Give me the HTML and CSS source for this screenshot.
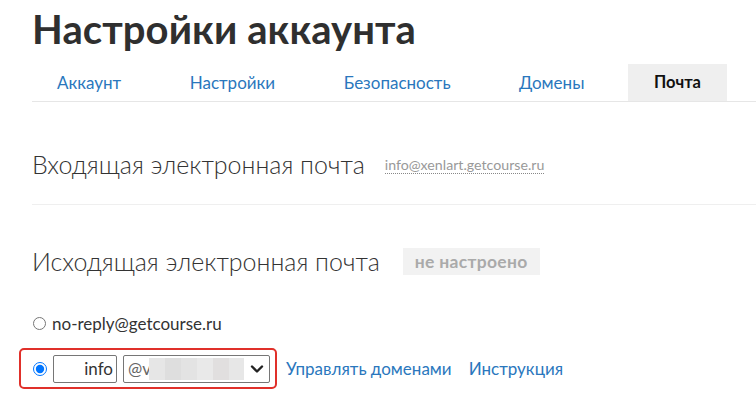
FILE: index.html
```html
<!DOCTYPE html>
<html lang="ru">
<head>
<meta charset="utf-8">
<title>Настройки аккаунта</title>
<link rel="stylesheet" href="styles.css">
</head>
<body>
<div class="page">
  <h1 class="title">Настройки аккаунта</h1>
  <nav class="tabs">
    <a class="tab" href="#">Аккаунт</a>
    <a class="tab" href="#">Настройки</a>
    <a class="tab" href="#">Безопасность</a>
    <a class="tab" href="#">Домены</a>
    <span class="tab active">Почта</span>
  </nav>

  <section class="section incoming">
    <h2 class="section-title">Входящая электронная почта</h2>
    <span class="addr">info@xenlart.getcourse.ru</span>
  </section>

  <section class="section outgoing">
    <h2 class="section-title">Исходящая электронная почта</h2>
    <span class="badge">не настроено</span>
  </section>

  <div class="option">
    <input type="radio" name="from" class="radio" id="r1">
    <label for="r1" class="option-label">no-reply@getcourse.ru</label>
  </div>

  <div class="option custom">
    <div class="highlight">
      <input type="radio" name="from" class="radio" checked>
      <input type="text" class="local" value="info">
      <div class="select">
        <span class="at">@v</span>
        <span class="blur">
          <i class="b1"></i><i class="b2"></i><i class="b3"></i><i class="b4"></i><i class="b5"></i><i class="b6"></i>
        </span>
        <svg class="chev" width="14" height="10" viewBox="0 0 14 10"><path d="M2 2.5 L7 7.5 L12 2.5" fill="none" stroke="#222" stroke-width="2.4" stroke-linecap="round" stroke-linejoin="round"/></svg>
      </div>
    </div>
    <a class="link" href="#">Управлять доменами</a>
    <a class="link" href="#">Инструкция</a>
  </div>
</div>
</body>
</html>
```

FILE: styles.css
```css
* { box-sizing: border-box; }
html, body { margin: 0; padding: 0; background: #fff; }
body {
  font-family: "Lato", "Open Sans", "Liberation Sans", sans-serif;
  color: #333;
  overflow: hidden;
}
.page {
  padding-left: 32px;
  width: 780px;
}
.title {
  margin: 0;
  padding-top: 5px;
  font-size: 40px;
  line-height: 49px;
  font-weight: 700;
  color: #2f2f2f;
  letter-spacing: 0.1px;
}
.tabs {
  display: flex;
  gap: 18.5px;
  margin-top: 10px;
  border-bottom: 1px solid #e6e6e6;
}
.tab {
  display: block;
  height: 37px;
  line-height: 37px;
  padding: 0 25px;
  font-size: 17px;
  color: #2a77bd;
  text-decoration: none;
}
.active {
  background: #efefef;
  color: #111;
  font-weight: 700;
  font-size: 16.5px;
  padding: 0 26px;
}
.section {
  display: flex;
  align-items: center;
  gap: 20px;
}
.incoming {
  height: 103px;
  padding-top: 21px;
  border-bottom: 1px solid #efefef;
}
.outgoing {
  height: 95px;
  padding-top: 17px;
}
.section-title {
  margin: 0;
  font-size: 25px;
  font-weight: 300;
  color: #333;
}
.addr {
  font-size: 14.2px;
  color: #999;
  border-bottom: 1px dotted #888;
  line-height: 17px;
  margin-top: 3px;
}
.badge {
  background: #f2f2f2;
  color: #aaa;
  font-weight: 700;
  font-size: 17.5px;
  letter-spacing: 0.3px;
  height: 27px;
  line-height: 27px;
  padding: 0 12px;
  margin-left: 3px;
}
.option {
  display: flex;
  align-items: center;
  height: 30px;
  margin-top: 8px;
}
.radio {
  margin: 0 6px 0 1px;
  width: 13px;
  height: 13px;
}
.option-label {
  font-size: 17px;
  color: #333;
}
.custom {
  margin-top: 10px;
  height: 41px;
  margin-left: -13px;
}
.highlight {
  display: flex;
  align-items: center;
  gap: 6px;
  height: 41px;
  padding: 0 5px 0 12px;
  border: 2px solid #e0302a;
  border-radius: 5px;
}
.highlight .radio {
  width: 14px;
  height: 14px;
  margin: 0;
}
.local {
  width: 64px;
  height: 28px;
  border: 1px solid #767676;
  border-radius: 2px;
  text-align: right;
  font-family: inherit;
  font-size: 17px;
  color: #333;
  padding: 0 3px;
}
.select {
  display: flex;
  align-items: center;
  width: 147px;
  height: 28px;
  border: 1px solid #767676;
  border-radius: 2px;
  padding: 0 5px 0 4px;
  font-size: 17px;
  color: #333;
}
.at { color: #666; }
.blur {
  display: flex;
  height: 22px;
  margin-left: -2px;
}
.blur i { display: block; height: 22px; }
.b1 { width: 16px; background: #e6e6e6; }
.b2 { width: 16px; background: #dedede; }
.b3 { width: 16px; background: #e3e3e3; }
.b4 { width: 16px; background: #e9e9e9; }
.b5 { width: 16px; background: #e1dfdf; }
.b6 { width: 15px; background: #e7e7e7; }
.chev { margin-left: auto; }
.link {
  font-size: 17px;
  color: #2a77bd;
  text-decoration: none;
  margin-left: 9px;
}
.link + .link { margin-left: 17px; }
```
